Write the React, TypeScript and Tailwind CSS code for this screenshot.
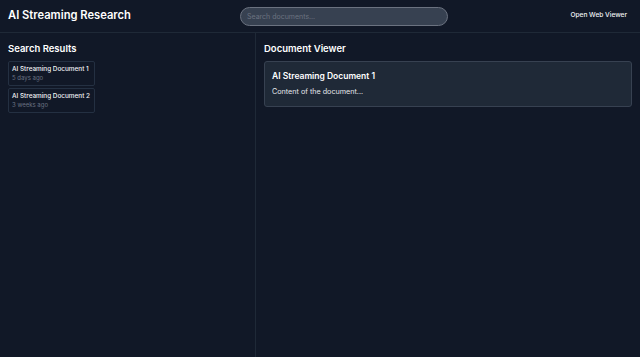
import { useState } from 'react'

const results = [
  { id: 1, title: 'AI Streaming Document 1', when: '5 days ago' },
  { id: 2, title: 'AI Streaming Document 2', when: '3 weeks ago' },
]

export default function App() {
  const [query, setQuery] = useState('')
  const [selected, setSelected] = useState(results[0])

  return (
    <div className="flex h-screen flex-col bg-[#111827] font-['Inter',sans-serif] text-white">
      <header className="flex h-[33px] shrink-0 items-center border-b border-[#1f2937] px-2">
        <h1 className="w-[232px] text-[11.2px] font-semibold leading-none">AI Streaming Research</h1>
        <input
          value={query}
          onChange={(e) => setQuery(e.target.value)}
          placeholder="Search documents..."
          className="h-[19px] w-[208px] rounded-full border border-[#6b7280] bg-[#374151] px-[6px] text-[7px] text-white outline-none placeholder:text-[#6b7280]"
        />
        <button type="button" className="ml-auto rounded px-[5px] py-[3px] text-[6.6px] font-medium text-gray-100">
          Open Web Viewer
        </button>
      </header>
      <div className="flex min-h-0 flex-1">
        <aside className="w-[256px] shrink-0 border-r border-[#1f2937] px-2 pt-[10px]">
          <h2 className="mb-[6px] text-[9.5px] font-semibold leading-[12px]">Search Results</h2>
          <div className="flex flex-col items-start gap-[2px]">
            {results.map((r) => (
              <button
                key={r.id}
                type="button"
                onClick={() => setSelected(r)}
                className="w-[87px] whitespace-nowrap rounded-[2px] border border-[#243042] px-[3px] py-[3px] text-left"
              >
                <div className="text-[6.4px] font-medium leading-[9px] text-gray-100">{r.title}</div>
                <div className="text-[6px] leading-[8px] text-gray-500">{r.when}</div>
              </button>
            ))}
          </div>
        </aside>
        <main className="flex-1 px-2 pt-[10px]">
          <h2 className="mb-[6px] text-[9.5px] font-semibold leading-[12px]">Document Viewer</h2>
          <div className="rounded-[3px] border border-[#374151] bg-[#1f2937] px-[7px] pb-[9px] pt-[8px]">
            <h3 className="text-[8.5px] font-semibold leading-[12px]">{selected.title}</h3>
            <p className="mt-[5px] text-[7.2px] leading-[10px] text-gray-200">Content of the document...</p>
          </div>
        </main>
      </div>
    </div>
  )
}
